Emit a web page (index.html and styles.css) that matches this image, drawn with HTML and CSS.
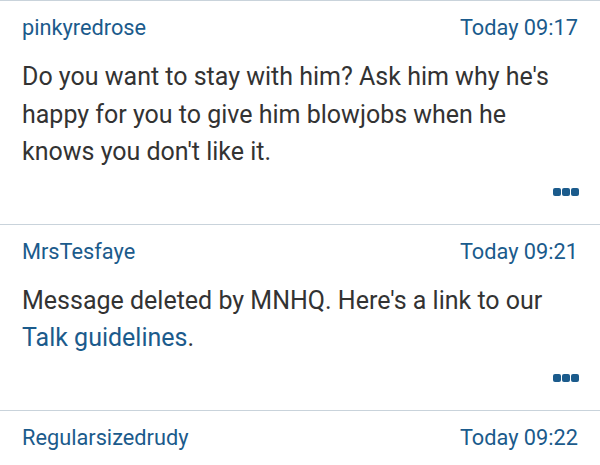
FILE: index.html
```html
<!DOCTYPE html>
<html>
<head>
<meta charset="utf-8">
<link rel="stylesheet" href="styles.css">
</head>
<body>
<div class="thread">
  <div class="post">
    <div class="post-head">
      <span class="user">pinkyredrose</span>
      <span class="time">Today 09:17</span>
    </div>
    <div class="post-body">Do you want to stay with him? Ask him why he's happy for you to give him blowjobs when he knows you don't like it.</div>
    <div class="post-foot"><span class="dots"><i></i><i></i><i></i></span></div>
  </div>
  <div class="post">
    <div class="post-head">
      <span class="user">MrsTesfaye</span>
      <span class="time">Today 09:21</span>
    </div>
    <div class="post-body">Message deleted by MNHQ. Here's a link to our <a class="link" href="#">Talk guidelines</a>.</div>
    <div class="post-foot"><span class="dots"><i></i><i></i><i></i></span></div>
  </div>
  <div class="post">
    <div class="post-head">
      <span class="user">Regularsizedrudy</span>
      <span class="time">Today 09:22</span>
    </div>
  </div>
</div>
</body>
</html>
```
FILE: styles.css
```css
html, body {
  margin: 0;
  padding: 0;
  background: #ffffff;
}
body {
  font-family: Roboto, "Noto Sans", sans-serif;
  color: #333333;
}
.post {
  border-top: 1px solid #c9d3db;
  padding: 14px 22px 28px 22px;
}
.post-head {
  display: flex;
  justify-content: space-between;
  align-items: center;
  font-size: 21.75px;
  line-height: 26px;
  color: #1b5b8c;
}
.post-body {
  margin-top: 17px;
  font-size: 25px;
  line-height: 37.5px;
  color: #333333;
}
.link {
  color: #1b5b8c;
  text-decoration: none;
  white-space: nowrap;
}
.post-foot {
  display: flex;
  justify-content: flex-end;
  margin-top: 17px;
}
.dots {
  display: flex;
  gap: 1px;
  margin-right: -1px;
}
.dots i {
  display: block;
  width: 8px;
  height: 8px;
  border-radius: 2px;
  background: #1b5b8c;
}
```
